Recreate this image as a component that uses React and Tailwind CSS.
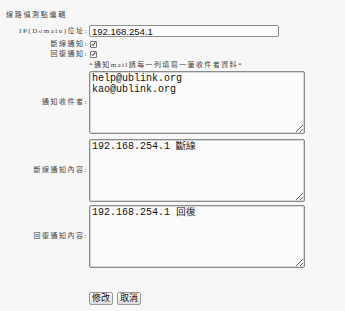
import { useState } from "react";

const cjk = "'Noto Sans CJK TC', 'Noto Sans CJK SC', sans-serif";

function Check() {
  return (
    <span className="inline-flex w-[7px] h-[7px] items-center justify-center border border-[#777] bg-white rounded-[1px] align-top">
      <svg width="6" height="6" viewBox="0 0 6 6">
        <path d="M0.8 3.2 L2.4 4.8 L5.3 0.9" fill="none" stroke="#111" strokeWidth="1.1" />
      </svg>
    </span>
  );
}

function Row({ label, className = "", children }) {
  return (
    <div className={"flex items-center " + className}>
      <div className="w-[89px] shrink-0 text-right pr-[1px] text-[7px] tracking-[1.5px] text-[#444] leading-[9px]">
        {label}
      </div>
      {children}
    </div>
  );
}

function Area({ value, className = "" }) {
  const [v, setV] = useState(value);
  return (
    <textarea
      value={v}
      onChange={(e) => setV(e.target.value)}
      className={
        "block w-[216px] h-[63px] border border-[#8c8c8c] rounded-[2px] bg-[#fbfbfb] px-[2px] py-[1px] text-[10px] leading-[11px] text-[#111] shadow-[inset_0_0_0_1px_#d6d6d6] outline-none font-['Liberation_Mono',monospace] " +
        className
      }
    />
  );
}

export default function App() {
  const [ip, setIp] = useState("192.168.254.1");
  return (
    <div
      className="w-[345px] h-[311px] bg-[#f7f7f7] overflow-hidden"
      style={{ fontFamily: "'Liberation Serif', " + cjk }}
    >
      <div className="pt-[10px] pl-[6px] text-[7px] tracking-[1.7px] leading-[10px] text-[#444]">
        線路偵測點編輯
      </div>

      <Row label="IP(Domain)位址:" className="mt-[5px]">
        <input
          value={ip}
          onChange={(e) => setIp(e.target.value)}
          className="w-[190px] h-[12px] border border-[#8c8c8c] rounded-[2px] bg-[#fcfcfc] px-[2px] text-[9.5px] leading-[10px] text-[#111] outline-none font-['Liberation_Sans',sans-serif]"
        />
      </Row>

      <Row label="斷線通知:" className="mt-[3px] h-[8px]">
        <div className="pl-[1px] leading-[7px] h-[7px]">
          <Check />
        </div>
      </Row>
      <Row label="回復通知:" className="mt-[2px] h-[8px]">
        <div className="pl-[1px] leading-[7px] h-[7px]">
          <Check />
        </div>
      </Row>

      <Row label="" className="mt-[3px] h-[8px]">
        <div className="text-[7px] tracking-[1.4px] text-[#444] leading-[8px] whitespace-nowrap">
          *通知mail請每一列填寫一筆收件者資料*
        </div>
      </Row>

      <Row label="通知收件者:" className="mt-[2px]">
        <Area value={"help@ublink.org\nkao@ublink.org"} />
      </Row>

      <Row label="斷線通知內容:" className="mt-[5px]">
        <Area value="192.168.254.1 斷線" className="h-[62px]" />
      </Row>

      <Row label="回復通知內容:" className="mt-[3px]">
        <Area value="192.168.254.1 回復" className="h-[62px]" />
      </Row>

      <div className="flex gap-[4px] pl-[89px] mt-[24px]">
        <button className="w-[24px] h-[13px] border border-[#9a9a9a] rounded-[2px] bg-gradient-to-b from-[#fdfdfd] to-[#dcdcdc] text-[9px] leading-[11px] text-[#111] p-0">
          修改
        </button>
        <button className="w-[24px] h-[13px] border border-[#9a9a9a] rounded-[2px] bg-gradient-to-b from-[#fdfdfd] to-[#dcdcdc] text-[9px] leading-[11px] text-[#111] p-0">
          取消
        </button>
      </div>
    </div>
  );
}
